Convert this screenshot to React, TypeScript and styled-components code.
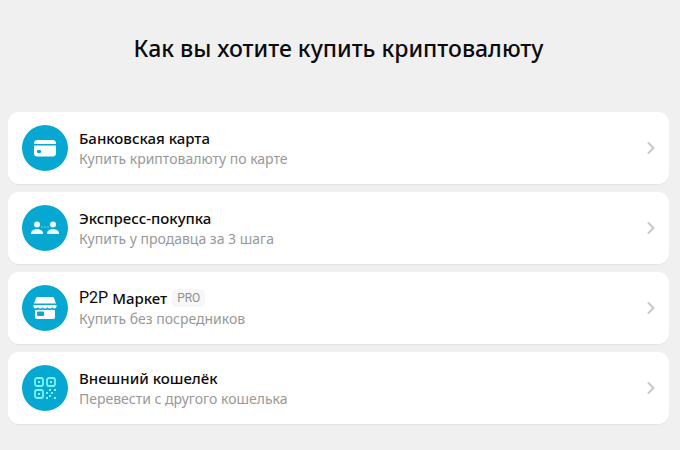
import React from "react";
import styled, { createGlobalStyle } from "styled-components";

const GlobalStyle = createGlobalStyle`
  * { box-sizing: border-box; }
  body {
    margin: 0;
    background: #f0f0f0;
    font-family: "Noto Sans", "Open Sans", sans-serif;
    color: #0b0b0b;
  }
`;

const Page = styled.main`
  min-height: 100vh;
  padding: 32px 11px 24px 8px;
`;

const Heading = styled.h1`
  margin: 0 0 48px;
  text-align: center;
  font-size: 23px;
  line-height: 32px;
  font-weight: 500;
`;

const Options = styled.div`
  display: flex;
  flex-direction: column;
  gap: 8px;
`;

const Option = styled.button`
  display: flex;
  align-items: center;
  gap: 11px;
  width: 100%;
  min-height: 72px;
  padding: 12px 13px 12px 14px;
  border: 0;
  border-radius: 11px;
  background: #fff;
  box-shadow: 0 1px 1px #e3e3e3;
  font: inherit;
  color: inherit;
  text-align: left;
  cursor: pointer;
`;

const Badge = styled.span`
  display: flex;
  flex: none;
  align-items: center;
  justify-content: center;
  width: 46px;
  height: 46px;
  border-radius: 50%;
  background: #06a7d1;
`;

const Body = styled.span`
  display: flex;
  flex: 1;
  flex-direction: column;
`;

const Title = styled.span`
  display: flex;
  align-items: center;
  font-size: 15px;
  line-height: 22px;
  font-weight: 550;
  white-space: pre;
`;

const Latin = styled.span`
  font-family: Roboto, sans-serif;
  font-size: 16px;
  font-weight: 400;
`;

const Tag = styled.span`
  margin-left: 5px;
  padding: 0 5px;
  border-radius: 4px;
  background: #f7f7f7;
  color: #8f8f8f;
  font-family: Roboto, sans-serif;
  font-size: 12px;
  line-height: 18px;
  font-weight: 400;
`;

const Hint = styled.span`
  color: #999;
  font-size: 14px;
  line-height: 20px;
`;

const ChevronIcon = () => (
  <svg width="10" height="14" viewBox="0 0 10 14" fill="none" stroke="#c8c8c8" strokeWidth="2" aria-hidden="true">
    <path d="M2 1.5 7.5 7 2 12.5" />
  </svg>
);

const CardIcon = () => (
  <svg width="30" height="30" viewBox="0 0 30 30" fill="#fff" aria-hidden="true">
    <path d="M4 10.500Q4 7 7.500 7h15Q26 7 26 10.500V11H4z" />
    <path fillRule="evenodd" d="M4 12.500h22v7.500q0 3.500-3.500 3.500h-15Q4 23.500 4 20zM8 17q-1 0-1 1v1q0 1 1 1h2q1 0 1-1v-1q0-1-1-1z" />
  </svg>
);

const PeopleIcon = () => (
  <svg width="30" height="30" viewBox="0 0 30 30" fill="#e9fcff" aria-hidden="true">
    <circle cx="7" cy="11.500" r="3" />
    <path d="M1 21v-1c0-2.300 3-4 6-4s6 1.700 6 4v1z" />
    <circle cx="23" cy="11.500" r="3" />
    <path d="M17 21v-1c0-2.300 3-4 6-4s6 1.700 6 4v1z" />
    <g fill="#6fe0ee">
      <circle cx="12" cy="14" r=".8" />
      <circle cx="15" cy="14" r=".8" />
      <circle cx="18" cy="14" r=".8" />
    </g>
  </svg>
);

const MarketIcon = () => (
  <svg width="30" height="30" viewBox="0 0 30 30" fill="#fff" aria-hidden="true">
    <path d="M7.500 4h15q1.200 0 1.600 1.200L26 10.500H4l1.900-5.300Q6.300 4 7.500 4z" />
    <path d="M3.500 12h23v1.300c0 2.600-3.600 3-4.600.8-1 2-3.600 2-4.600 0-1 2-3.600 2-4.600 0-1 2-3.600 2-4.600 0-1 2.200-4.600 1.800-4.600-.8z" />
    <path fillRule="evenodd" d="M5 17c1.200.4 2.400.1 3.200-.6 1.400 1 3.200 1 4.500 0 1.400 1 3.200 1 4.600 0 1.300 1 3.100 1 4.500 0 .8.700 2 1 3.200.6v7q0 2-2 2H7q-2 0-2-2zM8 18.500q-1 0-1 1V22q0 1 1 1h5q1 0 1-1v-2.500q0-1-1-1z" />
  </svg>
);

const QrIcon = () => (
  <svg width="30" height="30" viewBox="0 0 30 30" fill="none" stroke="#7df3f8" strokeWidth="1.800" aria-hidden="true">
    <rect x="5" y="5" width="8" height="8" rx="2" />
    <rect x="17" y="5" width="8" height="8" rx="2" />
    <rect x="5" y="17" width="8" height="8" rx="2" />
    <path stroke="none" fill="#7df3f8" d="M8 8h2v2H8zM20 8h2v2h-2zM8 20h2v2H8zM19 16h2v2h-2zM24 16h2v2h-2zM16 19h2v2h-2zM21 19h2v2h-2zM19 22h2v2h-2zM24 24h2v2h-2zM16 24h2v2h-2z" />
  </svg>
);

const options = [
  { icon: <CardIcon />, title: "Банковская карта", hint: "Купить криптовалюту по карте" },
  { icon: <PeopleIcon />, title: "Экспресс-покупка", hint: "Купить у продавца за 3 шага" },
  { icon: <MarketIcon />, latin: "P2P ", title: "Маркет", tag: "PRO", hint: "Купить без посредников" },
  { icon: <QrIcon />, title: "Внешний кошелёк", hint: "Перевести с другого кошелька" },
];

export default function App() {
  return (
    <>
      <GlobalStyle />
      <Page>
        <Heading>Как вы хотите купить криптовалюту</Heading>
        <Options>
          {options.map((option) => (
            <Option key={option.title} type="button">
              <Badge>{option.icon}</Badge>
              <Body>
                <Title>
                  {option.latin && <Latin>{option.latin}</Latin>}
                  {option.title}
                  {option.tag && <Tag>{option.tag}</Tag>}
                </Title>
                <Hint>{option.hint}</Hint>
              </Body>
              <ChevronIcon />
            </Option>
          ))}
        </Options>
      </Page>
    </>
  );
}
